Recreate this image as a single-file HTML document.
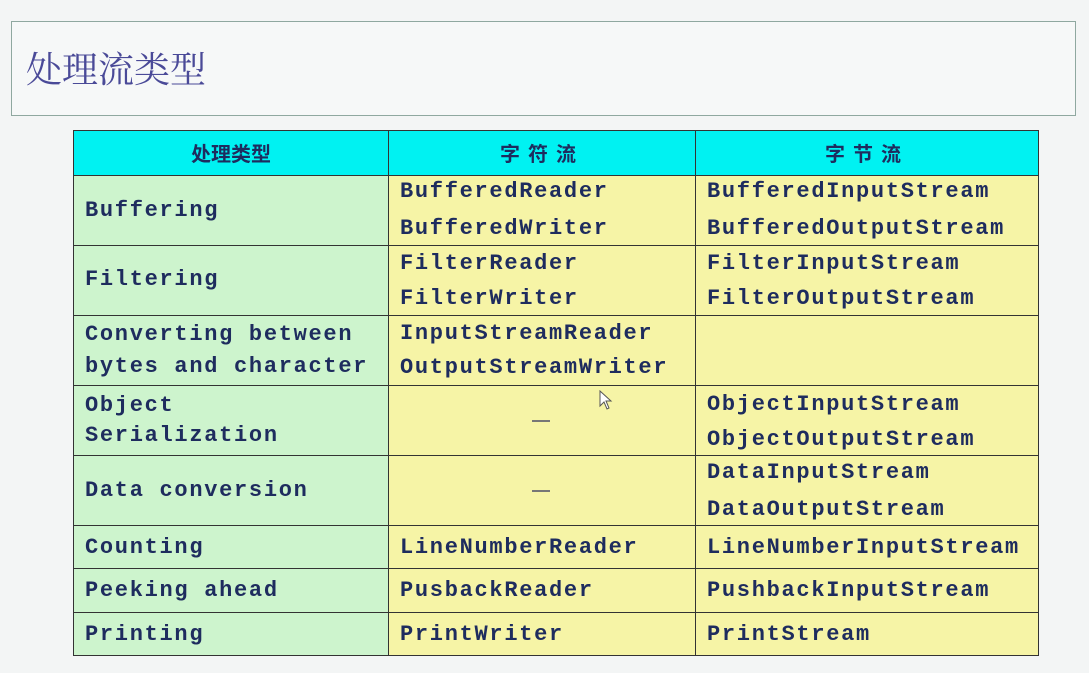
<!DOCTYPE html><html><head><meta charset="utf-8"><style>
body{margin:0;width:1089px;height:673px;background:#f3f5f5;position:relative;overflow:hidden;font-family:"Liberation Mono",monospace;}
.box{position:absolute;left:11px;top:21px;width:1065px;height:95px;border:1px solid #8fa8a0;background:#f6f8f8;box-sizing:border-box}
.title{position:absolute;left:26px;top:48px;font:36px "Liberation Serif","Noto Serif CJK SC",serif;color:#4a4a98;line-height:44px}
.c{position:absolute;box-sizing:border-box}
.t{position:absolute;font-weight:bold;font-size:22px;letter-spacing:1.7px;color:#1e2c5e;line-height:22px;white-space:nowrap}
.h{position:absolute;font:bold 20px "Noto Sans CJK SC",sans-serif;color:#1e2c5e;line-height:24px;text-align:center}
</style></head><body>
<div class="box"></div><div class="title">处理流类型</div>
<div class="c" style="left:73px;top:130px;width:966px;height:526px;border:1px solid #333;background:#f6f4a6"></div>
<div class="c" style="left:74px;top:131px;width:964px;height:44px;background:#00f2f2"></div>
<div class="c" style="left:74px;top:175px;width:314px;height:480px;background:#cdf4cd"></div>
<div class="c" style="left:388px;top:130px;width:1px;height:526px;background:#333"></div>
<div class="c" style="left:695px;top:130px;width:1px;height:526px;background:#333"></div>
<div class="c" style="left:73px;top:175px;width:966px;height:1px;background:#333"></div>
<div class="c" style="left:73px;top:245px;width:966px;height:1px;background:#333"></div>
<div class="c" style="left:73px;top:315px;width:966px;height:1px;background:#333"></div>
<div class="c" style="left:73px;top:385px;width:966px;height:1px;background:#333"></div>
<div class="c" style="left:73px;top:455px;width:966px;height:1px;background:#333"></div>
<div class="c" style="left:73px;top:525px;width:966px;height:1px;background:#333"></div>
<div class="c" style="left:73px;top:568px;width:966px;height:1px;background:#333"></div>
<div class="c" style="left:73px;top:612px;width:966px;height:1px;background:#333"></div>
<div class="h" style="left:74px;top:141px;width:314px">处理类型</div>
<div class="h" style="left:389px;top:141px;width:306px;letter-spacing:8px">字符流</div>
<div class="h" style="left:696px;top:141px;width:342px;letter-spacing:8px">字节流</div>

<div class="t" style="left:85px;top:200px">Buffering</div>
<div class="t" style="left:85px;top:269px">Filtering</div>
<div class="t" style="left:85px;top:324px">Converting between</div>
<div class="t" style="left:85px;top:356px">bytes and character</div>
<div class="t" style="left:85px;top:395px">Object</div>
<div class="t" style="left:85px;top:425px">Serialization</div>
<div class="t" style="left:85px;top:480px">Data conversion</div>
<div class="t" style="left:85px;top:537px">Counting</div>
<div class="t" style="left:85px;top:580px">Peeking ahead</div>
<div class="t" style="left:85px;top:624px">Printing</div>

<div class="t" style="left:400px;top:181px">BufferedReader</div>
<div class="t" style="left:400px;top:218px">BufferedWriter</div>
<div class="t" style="left:400px;top:253px">FilterReader</div>
<div class="t" style="left:400px;top:288px">FilterWriter</div>
<div class="t" style="left:400px;top:323px">InputStreamReader</div>
<div class="t" style="left:400px;top:357px">OutputStreamWriter</div>
<div class="c" style="left:532px;top:420px;width:18px;height:2px;background:#777"></div>
<div class="c" style="left:532px;top:490px;width:18px;height:2px;background:#777"></div>
<div class="t" style="left:400px;top:537px">LineNumberReader</div>
<div class="t" style="left:400px;top:580px">PusbackReader</div>
<div class="t" style="left:400px;top:624px">PrintWriter</div>

<div class="t" style="left:707px;top:181px">BufferedInputStream</div>
<div class="t" style="left:707px;top:218px">BufferedOutputStream</div>
<div class="t" style="left:707px;top:253px">FilterInputStream</div>
<div class="t" style="left:707px;top:288px">FilterOutputStream</div>
<div class="t" style="left:707px;top:394px">ObjectInputStream</div>
<div class="t" style="left:707px;top:429px">ObjectOutputStream</div>
<div class="t" style="left:707px;top:462px">DataInputStream</div>
<div class="t" style="left:707px;top:499px">DataOutputStream</div>
<div class="t" style="left:707px;top:537px">LineNumberInputStream</div>
<div class="t" style="left:707px;top:580px">PushbackInputStream</div>
<div class="t" style="left:707px;top:624px">PrintStream</div>
<svg style="position:absolute;left:599px;top:390px" width="14" height="22" viewBox="0 0 14 22"><path d="M1 1 L1 16 L5 12 L8 19 L10 18 L7 11 L12 11 Z" fill="#fff" stroke="#555" stroke-width="1"/></svg>
</body></html>
